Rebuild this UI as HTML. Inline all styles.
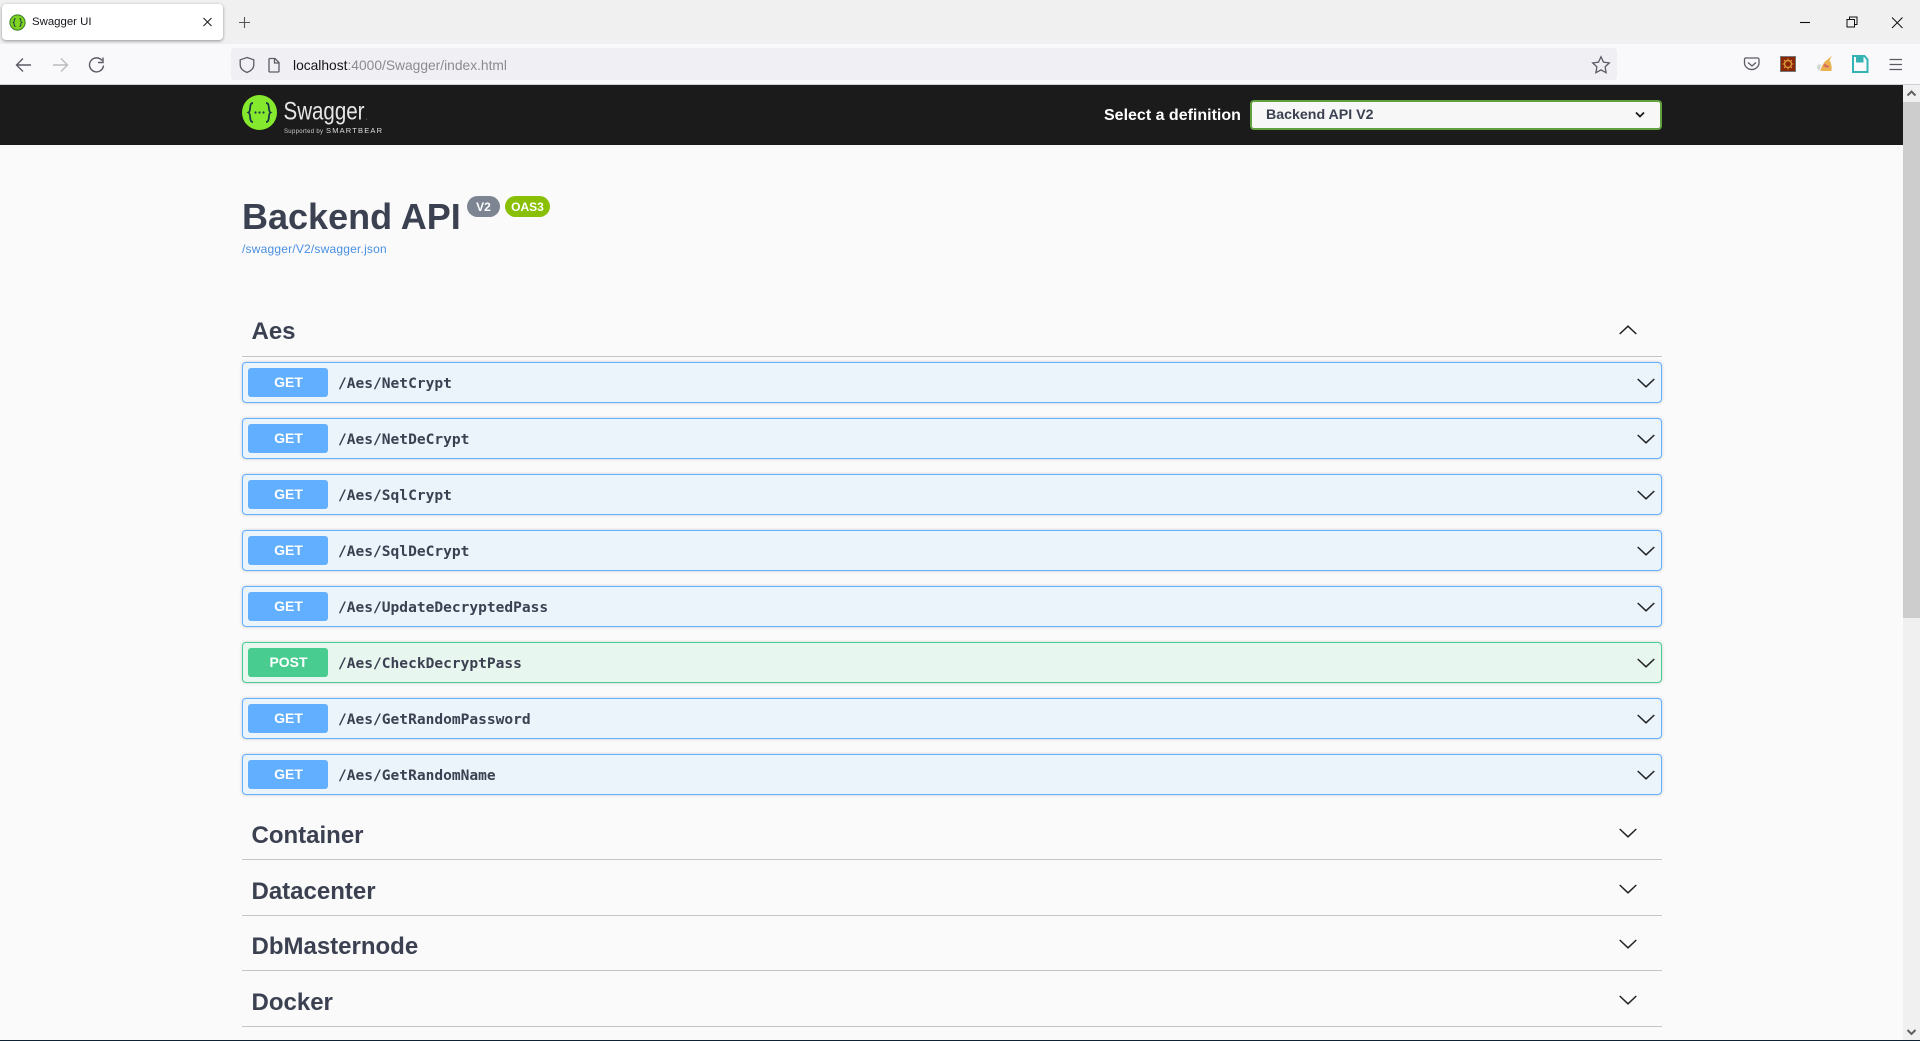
<!DOCTYPE html>
<html>
<head>
<meta charset="utf-8">
<title>Swagger UI</title>
<style>
html,body{margin:0;padding:0;width:1920px;height:1041px;overflow:hidden;background:#fafafa;font-family:"Liberation Sans",Arial,sans-serif;color:#3b4151}
.a{position:absolute}
svg{position:absolute;overflow:visible}
.op{position:absolute;left:242px;width:1420px;height:41px;box-sizing:border-box;border:1.4px solid #61affe;border-radius:4px;background:#ebf3fb;box-shadow:0 0 3px rgba(0,0,0,.19)}
.op.p{border-color:#49cc90;background:#e8f6f0}
.m{position:absolute;left:5px;top:5px;width:80px;height:29px;border-radius:3px;background:#61affe;color:#fff;font-weight:bold;font-size:14px;line-height:28px;text-align:center;text-indent:1px}
.p .m{background:#49cc90}
.t{position:absolute;left:95px;top:1px;line-height:40px;font-family:"DejaVu Sans Mono","Liberation Mono",monospace;font-weight:bold;font-size:14.55px;color:#3b4151;white-space:nowrap}
.tag{position:absolute;left:251.500px;font-size:24px;font-weight:bold;line-height:30px;color:#3b4151}
.hr{position:absolute;left:242px;width:1420px;height:1px;background:#c4c5c9}
</style>
</head>
<body>
<!-- tab strip -->
<div class="a" style="left:0;top:0;width:1920px;height:44px;background:#f0f0f1"></div>
<div class="a" style="left:2px;top:4px;width:221px;height:36px;background:#fff;border-radius:4px;box-shadow:0 1px 3px rgba(0,0,0,.4)"></div>
<svg style="left:0;top:0" width="1920" height="85" viewBox="0 0 1920 85">
<circle cx="17.5" cy="22.5" r="7.6" fill="#7ed321" stroke="#3a7a2a" stroke-width="1"/>
<path d="M15.5 18.5c-2 0 -.8 3.5 -2 4c1.2.5 0 4 2 4M19.5 18.5c2 0 .8 3.5 2 4c-1.200.5 0 4-2 4" fill="none" stroke="#173647" stroke-width="1"/>
<path d="M203.500 18l8 8M211.500 18l-8 8" stroke="#222" stroke-width="1.100" fill="none"/>
<path d="M244.500 17v11M239 22.500h11" stroke="#555" stroke-width="1.100" fill="none"/>
<!-- window controls -->
<path d="M1800 22.500h10" stroke="#111" stroke-width="1.100"/>
<path d="M1847 19.500h7.500v7.500h-7.500zM1849.500 19.500v-2.500h7.500v7.500h-2.500" fill="none" stroke="#111" stroke-width="1"/>
<path d="M1892 17.500l10.500 10.500M1902.500 17.500l-10.500 10.500" stroke="#111" stroke-width="1" fill="none"/>
</svg>
<div class="a" style="left:32px;top:14px;font-size:11.400px;line-height:17px;color:#15141a">Swagger UI</div>

<!-- toolbar -->
<div class="a" style="left:0;top:44px;width:1920px;height:40px;background:#f9f9fb"></div>
<div class="a" style="left:0;top:84px;width:1920px;height:1px;background:#cfcfd4"></div>
<div class="a" style="left:231px;top:48px;width:1386px;height:32px;background:#f0f0f4;border-radius:4px"></div>
<div class="a" style="left:293px;top:57px;font-size:13.800px;line-height:18px;color:#8a8a90;white-space:nowrap"><span style="color:#15141a">localhost</span>:4000/Swagger/index.html</div>
<svg style="left:0;top:0" width="1920" height="85" viewBox="0 0 1920 85">
<path d="M31 65H17.500M23 58.500l-6.500 6.500 6.500 6.500" fill="none" stroke="#5b5b66" stroke-width="1.400"/>
<path d="M53 65H66.500M61 58.500l6.500 6.500-6.500 6.500" fill="none" stroke="#b9b9c0" stroke-width="1.400"/>
<path d="M102 60.500a7 7 0 1 0 1.500 5M103 57.500v5h-5" fill="none" stroke="#5b5b66" stroke-width="1.400"/>
<path d="M247 57.500l6.800 2.300v5c0 3.800-3 6.200-6.800 7.700c-3.800-1.500-6.800-3.900-6.800-7.700v-5z" fill="none" stroke="#5b5b66" stroke-width="1.300"/>
<path d="M270 58.500h5l4 4v8.500a1 1 0 0 1-1 1h-8a1 1 0 0 1-1-1v-11.500a1 1 0 0 1 1-1zM274.500 58.500v4.500h4.500" fill="none" stroke="#5b5b66" stroke-width="1.300"/>
<path d="M1601 56.800l2.500 5.300 5.800.8-4.200 4 1 5.800-5.100-2.800-5.100 2.800 1-5.800-4.200-4 5.800-.8z" fill="none" stroke="#5b5b66" stroke-width="1.300"/>
<path d="M1746.500 58h11a1.500 1.500 0 0 1 1.500 1.500v4.500a7.500 7.500 0 0 1-14.500 0v-4.500a1.500 1.500 0 0 1 2-1.500z" fill="none" stroke="#5b5b66" stroke-width="1.300"/>
<path d="M1748 62.500l4 3.500 4-3.500" fill="none" stroke="#5b5b66" stroke-width="1.300"/>
<rect x="1780.500" y="56.500" width="15" height="15" fill="#8a2606" stroke="#77777a" stroke-width="1"/>
<circle cx="1788" cy="64" r="3.500" fill="none" stroke="#d6963a" stroke-width="1.500"/>
<path d="M1788 58.500v2M1788 67.500v2M1782.500 64h2M1791.500 64h2M1784 60l1.500 1.500M1790.500 66.500l1.500 1.500M1792 60l-1.500 1.500M1785.500 66.500l-1.500 1.500" stroke="#d6963a" stroke-width="1.100"/>
<path d="M1832 55.500l-2.500 5c1.800 2.500 2.500 6 2 10.500h-9c-1.500 0-2.500-.5-2-1.500c1.500-3.500 3.500-8 7-10l3-2.500z" fill="#e8b04e"/>
<path d="M1824 63.500l5 2.500-.5 2-5-1.500z" fill="#d9705e"/>
<path d="M1817 66c1-1.500 2.500-2 4-1.500l-1.500 6c-1.500-.2-3-2.500-2.500-4.500z" fill="#cfd8d2"/>
<path d="M1853 56h11.500l3 3.500v12.500h-14.500z" fill="none" stroke="#34b3b5" stroke-width="2"/>
<rect x="1856" y="57" width="7.500" height="5.500" fill="#34b3b5"/>
<path d="M1889.500 59.500h12.500M1889.500 64.500h12.500M1889.500 69.500h12.500" stroke="#5b5b66" stroke-width="1.300"/>
</svg>

<!-- swagger top bar -->
<div class="a" style="left:0;top:85px;width:1903px;height:60px;background:#1b1b1b"></div>
<svg style="left:0;top:85px" width="400" height="60" viewBox="0 85 400 60">
<circle cx="259.500" cy="112.500" r="17.500" fill="#85ea2d"/>
<path d="M253 103c-4.500 0-1.500 8-4.500 9.500c3 1.500 0 9.500 4.500 9.500M266 103c4.500 0 1.500 8 4.500 9.500c-3 1.500 0 9.500-4.500 9.500" fill="none" stroke="#173647" stroke-width="1.800"/>
<circle cx="255.500" cy="112.500" r="1.100" fill="#173647"/><circle cx="259.500" cy="112.500" r="1.100" fill="#173647"/><circle cx="263.500" cy="112.500" r="1.100" fill="#173647"/>
<text x="283.500" y="119.500" font-family="Liberation Sans" font-size="25" fill="#e6e6e6" textLength="81" lengthAdjust="spacingAndGlyphs">Swagger</text>
<text x="365.500" y="119.500" font-family="Liberation Sans" font-size="7" fill="#bbb">.</text>
<text x="284" y="133" font-family="Liberation Sans" font-size="6" fill="#ccc" textLength="39">Supported by</text>
<text x="326" y="133" font-family="Liberation Sans" font-size="7.500" fill="#ddd" textLength="56">SMARTBEAR</text>
</svg>
<div class="a" style="left:1104px;top:106px;font-size:16px;line-height:20px;font-weight:bold;color:#fff;white-space:nowrap">Select a definition</div>
<div class="a" style="left:1250px;top:100px;width:412px;height:30px;box-sizing:border-box;border:2px solid #62a03f;border-radius:4px;background:#f7f7f7"></div>
<div class="a" style="left:1266px;top:106px;font-size:14.200px;line-height:18px;font-weight:bold;color:#3b4151;white-space:nowrap">Backend API V2</div>
<svg style="left:1635px;top:111px" width="10" height="8" viewBox="0 0 10 8"><path d="M1 1.500l4 4 4-4" fill="none" stroke="#1b1b1b" stroke-width="1.800"/></svg>

<!-- info -->
<div class="a" style="left:242px;top:196px;font-size:36px;line-height:42px;font-weight:bold;color:#3b4151;white-space:nowrap">Backend API</div>
<div class="a" style="left:467px;top:196px;width:33px;height:21px;border-radius:11px;background:#7d8492;color:#fff;font-size:12px;font-weight:bold;line-height:22px;text-align:center">V2</div>
<div class="a" style="left:505px;top:196px;width:45px;height:21px;border-radius:11px;background:#89bf04;color:#fff;font-size:12px;font-weight:bold;line-height:22px;text-align:center">OAS3</div>
<div class="a" style="left:242px;top:242px;font-size:12px;line-height:15px;color:#4990e2;white-space:nowrap;letter-spacing:.2px">/swagger/V2/swagger.json</div>

<!-- Aes -->
<div class="tag" style="top:316.500px">Aes</div>
<div class="hr" style="top:356px"></div>
<svg style="left:1619px;top:325px" width="18" height="10" viewBox="0 0 18 10"><path d="M.7 9L9 1.200 17.300 9" fill="none" stroke="#222" stroke-width="1.500"/></svg>

<div class="op" style="top:362px"><div class="m">GET</div><div class="t">/Aes/NetCrypt</div><svg width="18" height="10" viewBox="0 0 18 10" style="left:1394px;top:14.500px"><path d="M.7 1L9 8.800 17.300 1" fill="none" stroke="#222" stroke-width="1.500"/></svg></div>
<div class="op" style="top:418px"><div class="m">GET</div><div class="t">/Aes/NetDeCrypt</div><svg width="18" height="10" viewBox="0 0 18 10" style="left:1394px;top:14.500px"><path d="M.7 1L9 8.800 17.300 1" fill="none" stroke="#222" stroke-width="1.500"/></svg></div>
<div class="op" style="top:474px"><div class="m">GET</div><div class="t">/Aes/SqlCrypt</div><svg width="18" height="10" viewBox="0 0 18 10" style="left:1394px;top:14.500px"><path d="M.7 1L9 8.800 17.300 1" fill="none" stroke="#222" stroke-width="1.500"/></svg></div>
<div class="op" style="top:530px"><div class="m">GET</div><div class="t">/Aes/SqlDeCrypt</div><svg width="18" height="10" viewBox="0 0 18 10" style="left:1394px;top:14.500px"><path d="M.7 1L9 8.800 17.300 1" fill="none" stroke="#222" stroke-width="1.500"/></svg></div>
<div class="op" style="top:586px"><div class="m">GET</div><div class="t">/Aes/UpdateDecryptedPass</div><svg width="18" height="10" viewBox="0 0 18 10" style="left:1394px;top:14.500px"><path d="M.7 1L9 8.800 17.300 1" fill="none" stroke="#222" stroke-width="1.500"/></svg></div>
<div class="op p" style="top:642px"><div class="m">POST</div><div class="t">/Aes/CheckDecryptPass</div><svg width="18" height="10" viewBox="0 0 18 10" style="left:1394px;top:14.500px"><path d="M.7 1L9 8.800 17.300 1" fill="none" stroke="#222" stroke-width="1.500"/></svg></div>
<div class="op" style="top:698px"><div class="m">GET</div><div class="t">/Aes/GetRandomPassword</div><svg width="18" height="10" viewBox="0 0 18 10" style="left:1394px;top:14.500px"><path d="M.7 1L9 8.800 17.300 1" fill="none" stroke="#222" stroke-width="1.500"/></svg></div>
<div class="op" style="top:754px"><div class="m">GET</div><div class="t">/Aes/GetRandomName</div><svg width="18" height="10" viewBox="0 0 18 10" style="left:1394px;top:14.500px"><path d="M.7 1L9 8.800 17.300 1" fill="none" stroke="#222" stroke-width="1.500"/></svg></div>

<!-- other tags -->
<div class="tag" style="top:820.500px">Container</div>
<div class="hr" style="top:859px"></div>
<svg style="left:1619px;top:828px" width="18" height="10" viewBox="0 0 18 10"><path d="M.7 1L9 8.800 17.300 1" fill="none" stroke="#222" stroke-width="1.500"/></svg>
<div class="tag" style="top:876.500px">Datacenter</div>
<div class="hr" style="top:915px"></div>
<svg style="left:1619px;top:884px" width="18" height="10" viewBox="0 0 18 10"><path d="M.7 1L9 8.800 17.300 1" fill="none" stroke="#222" stroke-width="1.500"/></svg>
<div class="tag" style="top:931.500px">DbMasternode</div>
<div class="hr" style="top:970px"></div>
<svg style="left:1619px;top:939px" width="18" height="10" viewBox="0 0 18 10"><path d="M.7 1L9 8.800 17.300 1" fill="none" stroke="#222" stroke-width="1.500"/></svg>
<div class="tag" style="top:987.500px">Docker</div>
<div class="hr" style="top:1026px"></div>
<svg style="left:1619px;top:995px" width="18" height="10" viewBox="0 0 18 10"><path d="M.7 1L9 8.800 17.300 1" fill="none" stroke="#222" stroke-width="1.500"/></svg>

<!-- scrollbar -->
<div class="a" style="left:1903px;top:85px;width:17px;height:955px;background:#f0f0f0"></div>
<div class="a" style="left:1903px;top:102px;width:17px;height:516px;background:#cdcdcd"></div>
<svg style="left:1903px;top:85px" width="17" height="17" viewBox="0 0 17 17"><path d="M4.500 10.500l4-4 4 4" fill="none" stroke="#606060" stroke-width="2"/></svg>
<svg style="left:1903px;top:1024px" width="17" height="17" viewBox="0 0 17 17"><path d="M4.500 6l4 4 4-4" fill="none" stroke="#606060" stroke-width="2"/></svg>
<div class="a" style="left:0;top:1040px;width:1920px;height:1px;background:#0f2233"></div>
</body>
</html>
